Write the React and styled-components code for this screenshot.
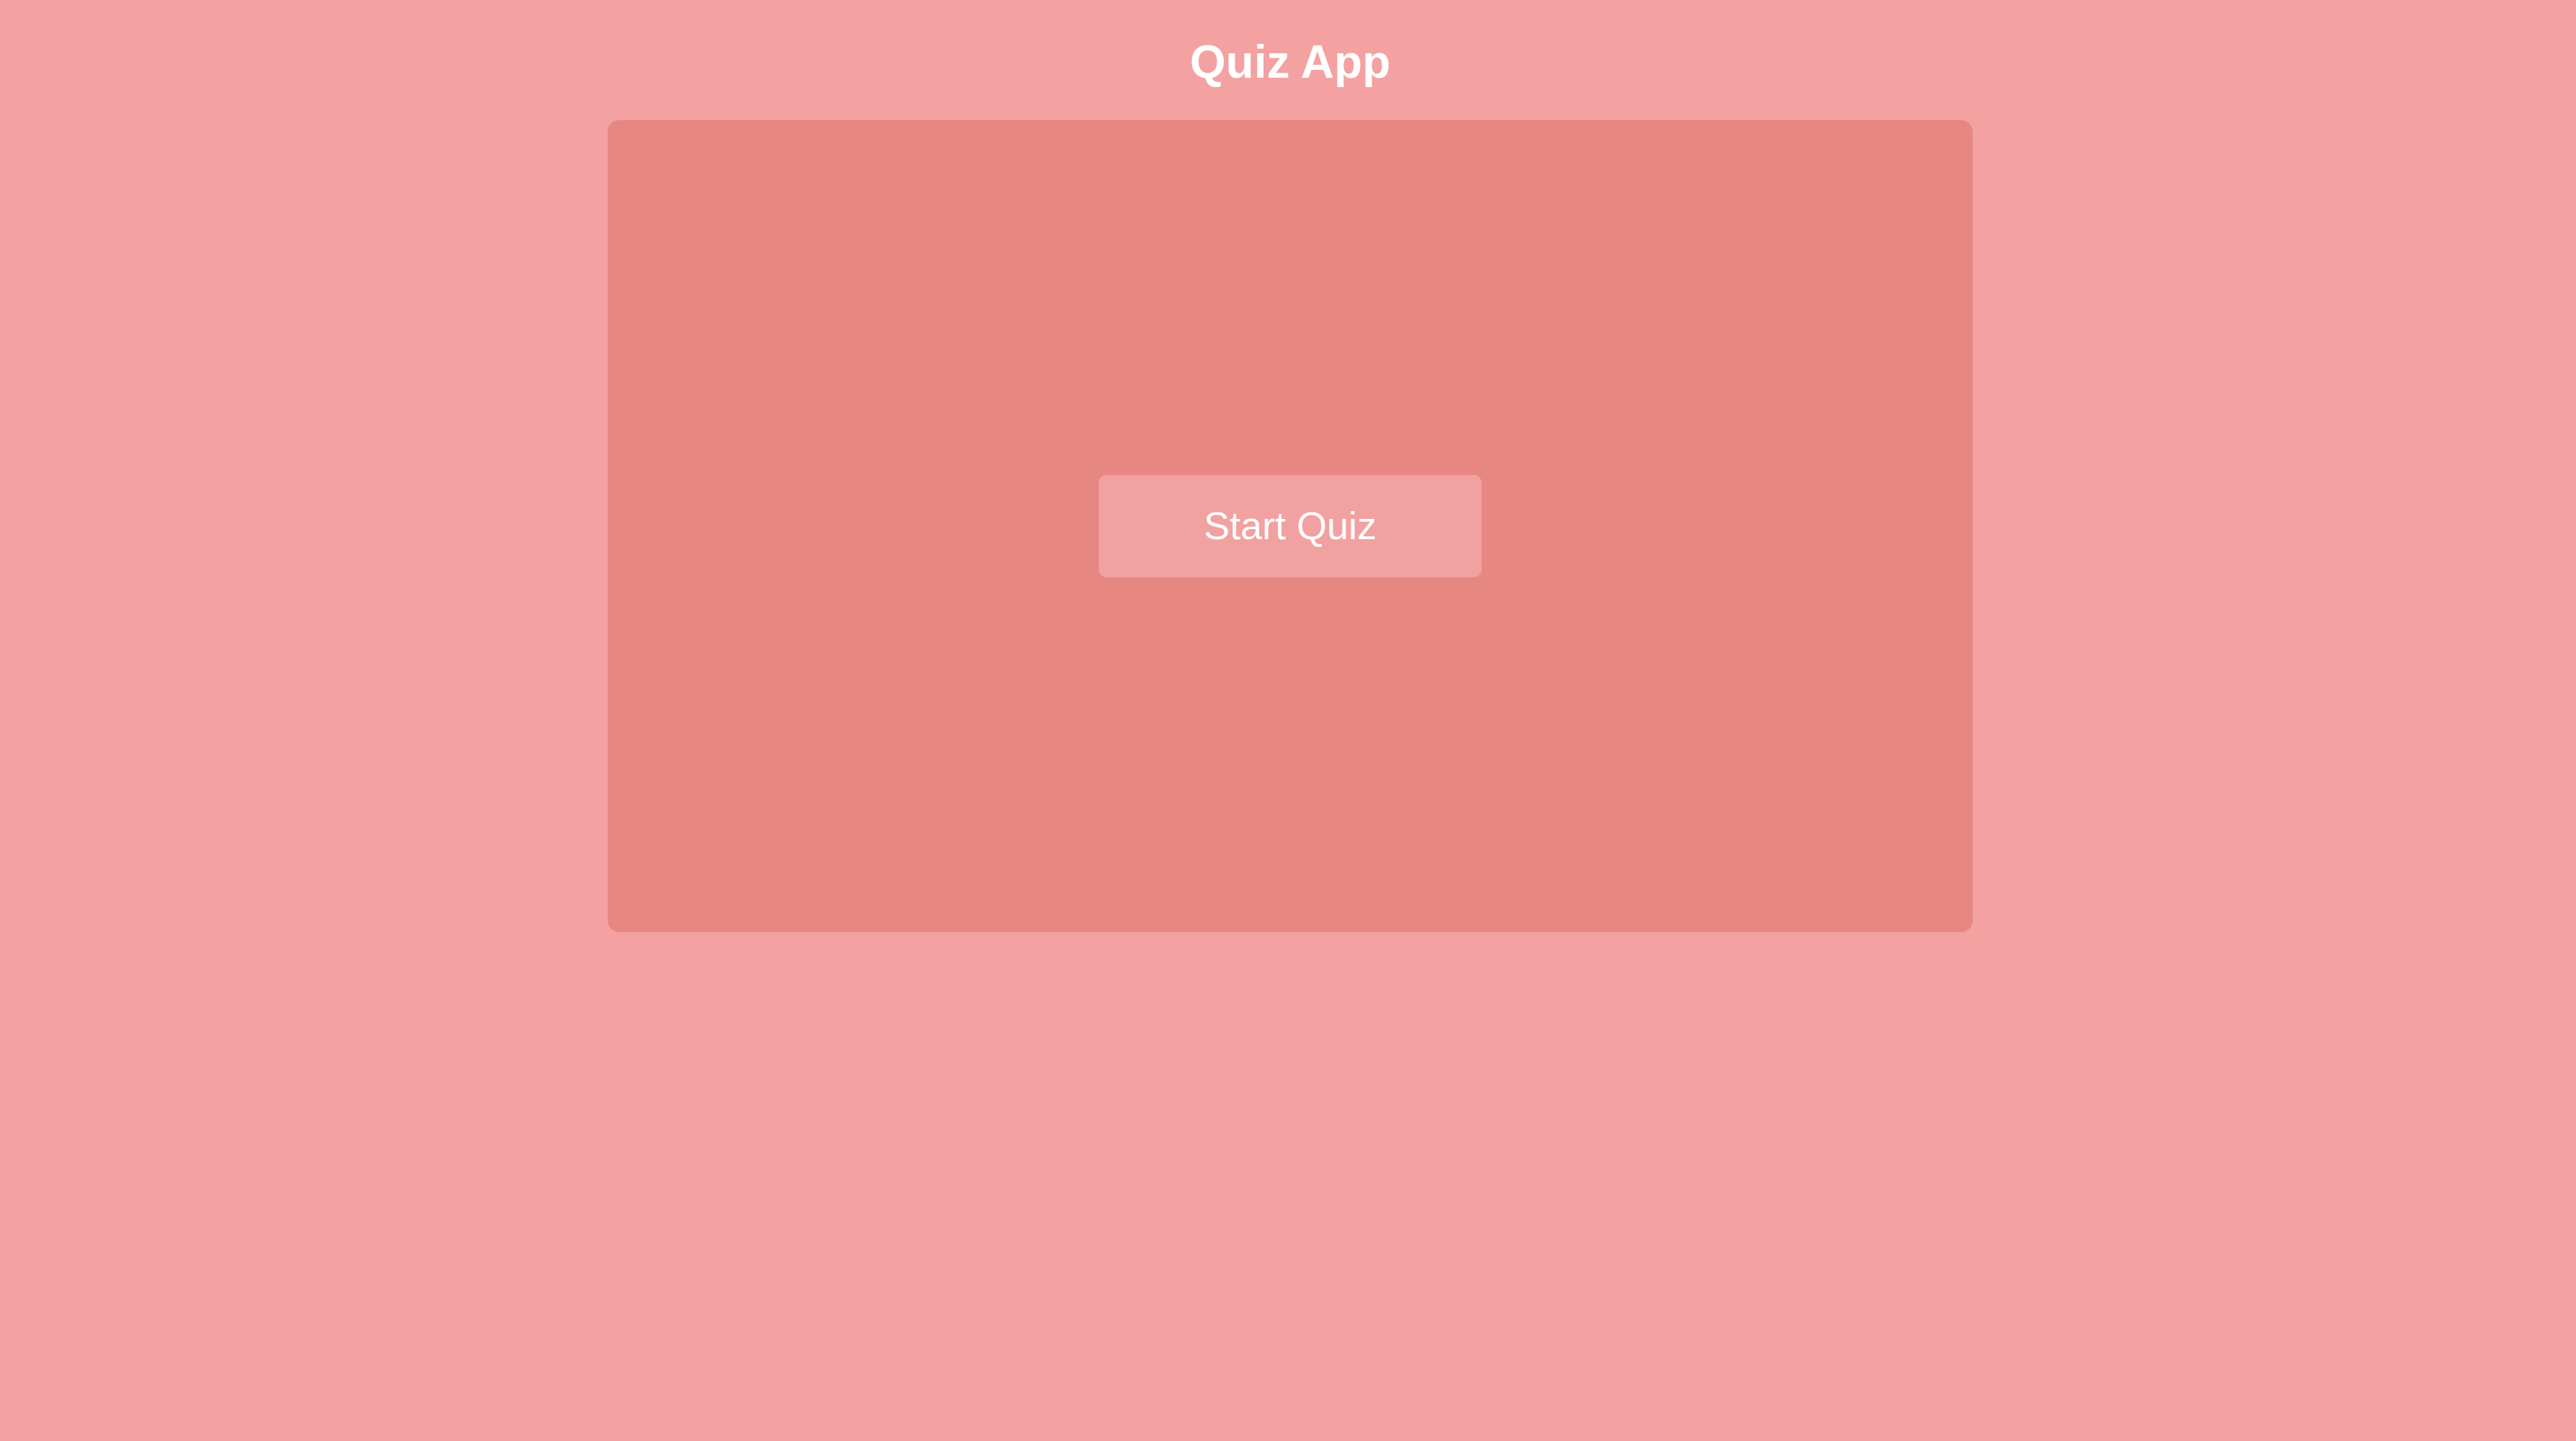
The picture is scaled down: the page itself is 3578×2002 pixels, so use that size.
import React from "react";
import styled, { createGlobalStyle } from "styled-components";

const GlobalStyle = createGlobalStyle`
  html, body {
    margin: 0;
    padding: 0;
    background: #f3a1a1;
    font-family: "Liberation Sans", Arial, sans-serif;
  }
  #root {
    min-height: 100vh;
  }
`;

const Page = styled.div`
  min-height: 100vh;
  box-sizing: border-box;
  padding: 49px 0 0 6px;
  display: flex;
  flex-direction: column;
  align-items: center;
  background: #f3a1a1;
`;

const Title = styled.h1`
  margin: 0 0 44px;
  font-size: 64px;
  line-height: 74px;
  font-weight: 700;
  color: #ffffff;
`;

const Card = styled.div`
  width: 1896px;
  height: 1128px;
  box-sizing: border-box;
  background: #e78781;
  border-radius: 16px;
  display: flex;
  align-items: center;
  justify-content: center;
`;

const StartButton = styled.button`
  width: 532px;
  height: 142px;
  border: none;
  border-radius: 11px;
  background: #f2a1a1;
  color: #ffffff;
  font-family: "Liberation Sans", Arial, sans-serif;
  font-size: 54px;
  line-height: 62px;
  padding: 0 0 2px;
  cursor: pointer;
`;

export default function App() {
  return (
    <>
      <GlobalStyle />
      <Page>
        <Title>Quiz App</Title>
        <Card>
          <StartButton>Start Quiz</StartButton>
        </Card>
      </Page>
    </>
  );
}
